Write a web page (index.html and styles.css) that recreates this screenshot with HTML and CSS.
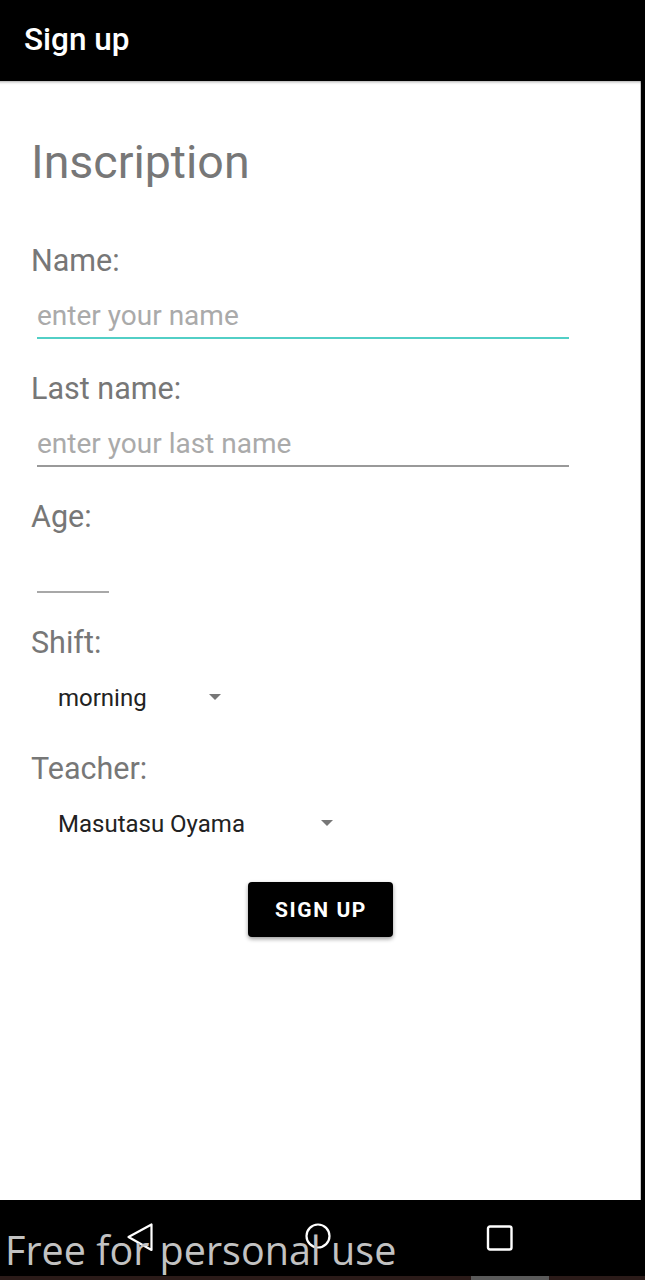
FILE: index.html
```html
<!DOCTYPE html>
<html lang="en">
<head>
<meta charset="utf-8">
<title>Sign up</title>
<link rel="stylesheet" href="styles.css">
</head>
<body>
  <header class="appbar">Sign up</header>

  <main class="screen">
    <form class="form">
      <h1 class="title">Inscription</h1>

      <label class="label" for="name">Name:</label>
      <input class="input input-wide input-focused" id="name" type="text" placeholder="enter your name">

      <label class="label label-gap" for="lastname">Last name:</label>
      <input class="input input-wide" id="lastname" type="text" placeholder="enter your last name">

      <label class="label label-gap" for="age">Age:</label>
      <input class="input input-short input-age" id="age" type="text">

      <span class="label label-gap">Shift:</span>
      <div class="spinner">
        <span class="spinner-value spinner-shift">morning</span>
        <span class="spinner-arrow"></span>
      </div>

      <span class="label label-gap-lg">Teacher:</span>
      <div class="spinner">
        <span class="spinner-value spinner-teacher">Masutasu Oyama</span>
        <span class="spinner-arrow"></span>
      </div>
    </form>

    <div class="actions">
      <button class="btn" type="button">SIGN UP</button>
    </div>
  </main>

  <nav class="navbar">
    <svg class="nav-icon" width="30" height="30" viewBox="0 0 30 30" aria-label="Back">
      <polygon points="26.5,2.5 26.5,28 3.5,15" fill="none" stroke="#fff" stroke-width="2.2" stroke-linejoin="round"/>
    </svg>
    <svg class="nav-icon" width="30" height="30" viewBox="0 0 30 30" aria-label="Home">
      <circle cx="15" cy="14" r="11.5" fill="none" stroke="#fff" stroke-width="2.2"/>
    </svg>
    <svg class="nav-icon" width="30" height="30" viewBox="0 0 30 30" aria-label="Recents">
      <rect x="3" y="4.5" width="23.5" height="23" rx="2" fill="none" stroke="#fff" stroke-width="2.4"/>
    </svg>
    <span class="watermark">Free for personal use</span>
  </nav>
  <div class="strip"><span class="strip-seg"></span></div>
</body>
</html>
```

FILE: styles.css
```css
html, body {
  margin: 0;
  padding: 0;
}

body {
  width: 645px;
  height: 1280px;
  overflow: hidden;
  background: #000;
  font-family: Roboto, "Noto Sans", "Liberation Sans", sans-serif;
}

.appbar {
  box-sizing: border-box;
  height: 81px;
  display: flex;
  align-items: center;
  padding: 0 0 2px 24px;
  color: #fff;
  font-size: 31.5px;
  line-height: 36px;
  font-weight: 500;
}

.screen {
  box-sizing: border-box;
  width: 641px;
  height: 1119px;
  background: #fff;
  padding-top: 54px;
  box-shadow: inset 0 4px 3px -3px rgba(0, 0, 0, 0.35), inset -1px 0 0 #c8c8c8;
}

.form {
  display: flex;
  flex-direction: column;
  align-items: flex-start;
  padding-left: 31px;
  margin: 0;
}

.title {
  margin: 0 0 54px;
  font-size: 46.5px;
  line-height: 54px;
  font-weight: 400;
  color: #777;
}

.label {
  font-size: 30.5px;
  line-height: 36px;
  color: #777;
}

.label-gap {
  margin-top: 32px;
}

.label-gap-lg {
  margin-top: 37px;
}

.input {
  box-sizing: border-box;
  margin: 19px 0 0 6px;
  height: 41px;
  padding: 0 0 5px 0;
  border: none;
  border-bottom: 2px solid #999;
  background: transparent;
  font-family: Roboto, "Noto Sans", sans-serif;
  font-size: 28px;
  line-height: 34px;
  color: #222;
  outline: none;
}

.input::placeholder {
  color: #aaa;
}

.input-wide {
  width: 532px;
}

.input-short {
  width: 72px;
}

.input-age {
  margin-top: 17px;
  border-bottom-color: #a8a8a8;
}

.input-focused {
  border-bottom-color: #52cfc6;
}

.spinner {
  display: flex;
  align-items: center;
  margin: 21px 0 0 27px;
  height: 32px;
}

.spinner-value {
  font-size: 24px;
  line-height: 32px;
  color: #222;
}

.spinner-shift {
  width: 151px;
}

.spinner-teacher {
  width: 263px;
}

.spinner-arrow {
  width: 0;
  height: 0;
  border-left: 6.5px solid transparent;
  border-right: 6.5px solid transparent;
  border-top: 6.5px solid #777;
  margin-top: -3px;
}

.actions {
  display: flex;
  justify-content: center;
  margin-top: 42px;
}

.btn {
  box-sizing: border-box;
  width: 145px;
  height: 55px;
  border: none;
  border-radius: 4px;
  background: #000;
  color: #fff;
  font-family: Roboto, "Noto Sans", sans-serif;
  font-size: 21px;
  font-weight: 700;
  letter-spacing: 1.6px;
  padding: 0 0 0 1px;
  box-shadow: 0 2px 4px rgba(0, 0, 0, 0.4);
}

.navbar {
  position: relative;
  box-sizing: border-box;
  height: 76px;
  display: flex;
  align-items: flex-start;
  gap: 148px;
  padding: 22px 0 0 125px;
}

.nav-icon {
  display: block;
  flex: none;
}

.nav-icon + .nav-icon + .nav-icon {
  margin-left: 4px;
}

.watermark {
  position: absolute;
  left: 5px;
  top: 30px;
  font-family: "Open Sans", "DejaVu Sans", sans-serif;
  font-size: 39.5px;
  line-height: 40px;
  color: #c2c2c2;
  white-space: nowrap;
  pointer-events: none;
}

.strip {
  display: flex;
  height: 4px;
  background: #2b1b19;
}

.strip-seg {
  margin-left: 471px;
  width: 78px;
  background: #5a5a5a;
}
```
